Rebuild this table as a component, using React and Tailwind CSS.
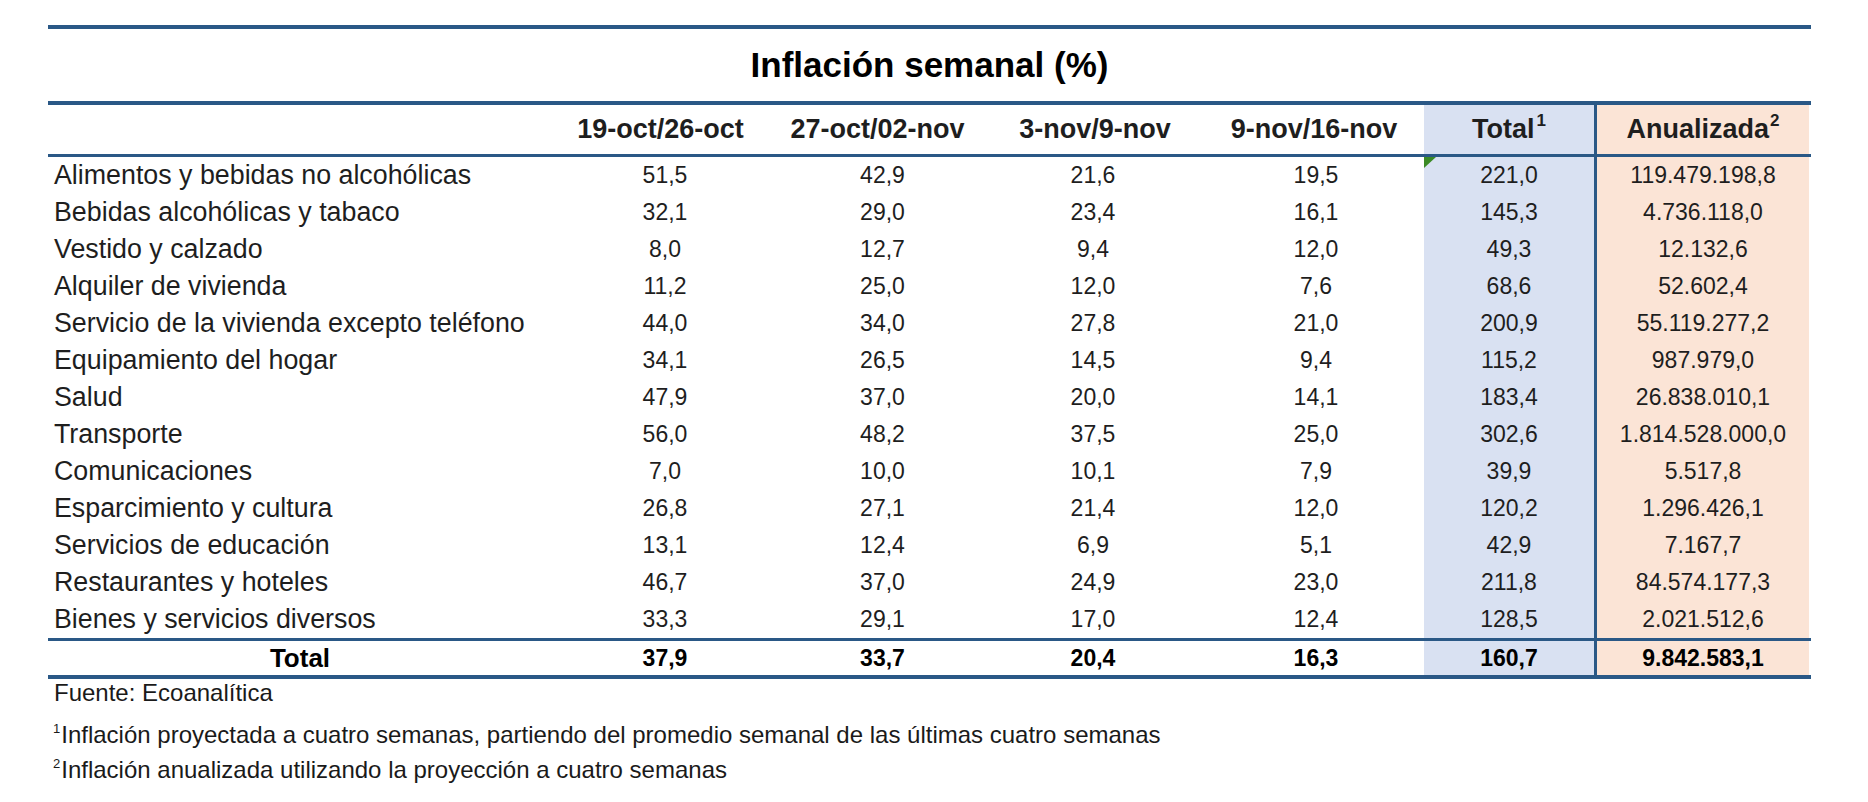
import React from 'react';

const rows = [
  ['Alimentos y bebidas no alcohólicas', '51,5', '42,9', '21,6', '19,5', '221,0', '119.479.198,8'],
  ['Bebidas alcohólicas y tabaco', '32,1', '29,0', '23,4', '16,1', '145,3', '4.736.118,0'],
  ['Vestido y calzado', '8,0', '12,7', '9,4', '12,0', '49,3', '12.132,6'],
  ['Alquiler de vivienda', '11,2', '25,0', '12,0', '7,6', '68,6', '52.602,4'],
  ['Servicio de la vivienda excepto teléfono', '44,0', '34,0', '27,8', '21,0', '200,9', '55.119.277,2'],
  ['Equipamiento del hogar', '34,1', '26,5', '14,5', '9,4', '115,2', '987.979,0'],
  ['Salud', '47,9', '37,0', '20,0', '14,1', '183,4', '26.838.010,1'],
  ['Transporte', '56,0', '48,2', '37,5', '25,0', '302,6', '1.814.528.000,0'],
  ['Comunicaciones', '7,0', '10,0', '10,1', '7,9', '39,9', '5.517,8'],
  ['Esparcimiento y cultura', '26,8', '27,1', '21,4', '12,0', '120,2', '1.296.426,1'],
  ['Servicios de educación', '13,1', '12,4', '6,9', '5,1', '42,9', '7.167,7'],
  ['Restaurantes y hoteles', '46,7', '37,0', '24,9', '23,0', '211,8', '84.574.177,3'],
  ['Bienes y servicios diversos', '33,3', '29,1', '17,0', '12,4', '128,5', '2.021.512,6'],
];

const totals = ['37,9', '33,7', '20,4', '16,3', '160,7', '9.842.583,1'];

// small nudges so the figures sit where the sheet has them
const numPad = ['pl-[9px]', 'pl-[10px]', 'pr-[4px]', 'pl-[4px]'];

const grid = 'grid grid-cols-[504px_217px_217px_218px_220px_170px_217px]';

const DataRow = ({ row, first }) => (
  <div className={`${grid} h-[37px] leading-[37px] text-[#1e1e1e]`}>
    <div className="pl-[6px] text-[26.8px] whitespace-nowrap">{row[0]}</div>
    {row.slice(1, 5).map((v, i) => (
      <div key={i} className={`text-center text-[23px] ${numPad[i]}`}>{v}</div>
    ))}
    <div className="relative bg-[#d9e1f2] text-center text-[23px]">
      {first && (
        <svg className="absolute left-0 top-0" width="12" height="11" viewBox="0 0 12 11">
          <polygon points="0,0 12,0 0,11" fill="#3b8a25" />
        </svg>
      )}
      {row[5]}
    </div>
    <div className="border-l-[3px] border-[#2a5886] text-center text-[23px] mr-[2px] bg-[#fbe4d6]">{row[6]}</div>
  </div>
);

const App = () => {
  return (
    <div className="w-[1868px] h-[802px] bg-white font-['Liberation_Sans',Arial,sans-serif] overflow-hidden">
      <div className="ml-[48px] mt-[25px] w-[1763px]">
        {/* title */}
        <div className="border-t-4 border-[#2a5886] h-[76px] flex items-center justify-center text-[35px] font-bold text-black">
          Inflación semanal (%)
        </div>

        {/* header */}
        <div className={`${grid} border-t-4 border-b-[3px] border-[#2a5886] h-[56px] leading-[49px] text-[27px] font-bold text-[#1e1e1e]`}>
          <div></div>
          <div className="text-center">19-oct/26-oct</div>
          <div className="text-center">27-oct/02-nov</div>
          <div className="text-center">3-nov/9-nov</div>
          <div className="text-center">9-nov/16-nov</div>
          <div className="bg-[#d9e1f2] text-center">
            Total<sup className="text-[17px] top-[-12px] ml-[2px]">1</sup>
          </div>
          <div className="border-l-[3px] border-[#2a5886] bg-[#fbe4d6] mr-[2px] text-center">
            Anualizada<sup className="text-[17px] top-[-12px] ml-[1px]">2</sup>
          </div>
        </div>

        {/* body */}
        <div className="border-b-[3px] border-[#2a5886]">
          {rows.map((r, i) => (
            <DataRow key={r[0]} row={r} first={i === 0} />
          ))}
        </div>

        {/* total */}
        <div className={`${grid} h-[38px] border-b-4 border-[#2a5886] leading-[34px] font-bold text-black`}>
          <div className="text-center text-[26px]">Total</div>
          {totals.slice(0, 4).map((v, i) => (
            <div key={i} className={`text-center text-[23px] ${numPad[i]}`}>{v}</div>
          ))}
          <div className="bg-[#d9e1f2] text-center text-[23px]">{totals[4]}</div>
          <div className="border-l-[3px] border-[#2a5886] bg-[#fbe4d6] mr-[2px] text-center text-[23px]">{totals[5]}</div>
        </div>

        {/* notes */}
        <div className="pl-[6px] text-[24px] text-[#1a1a1a]">
          <div className="leading-[28px]">Fuente: Ecoanalítica</div>
          <div className="mt-[10px] leading-[35px] -ml-[1px]">
            <sup className="text-[13px] top-[-10px] mr-[1px]">1</sup>Inflación proyectada a cuatro semanas, partiendo del promedio semanal de las últimas cuatro semanas
          </div>
          <div className="leading-[35px] -ml-[1px]">
            <sup className="text-[13px] top-[-10px] mr-[1px]">2</sup>Inflación anualizada utilizando la proyección a cuatro semanas
          </div>
        </div>
      </div>
    </div>
  );
};

export default App;
